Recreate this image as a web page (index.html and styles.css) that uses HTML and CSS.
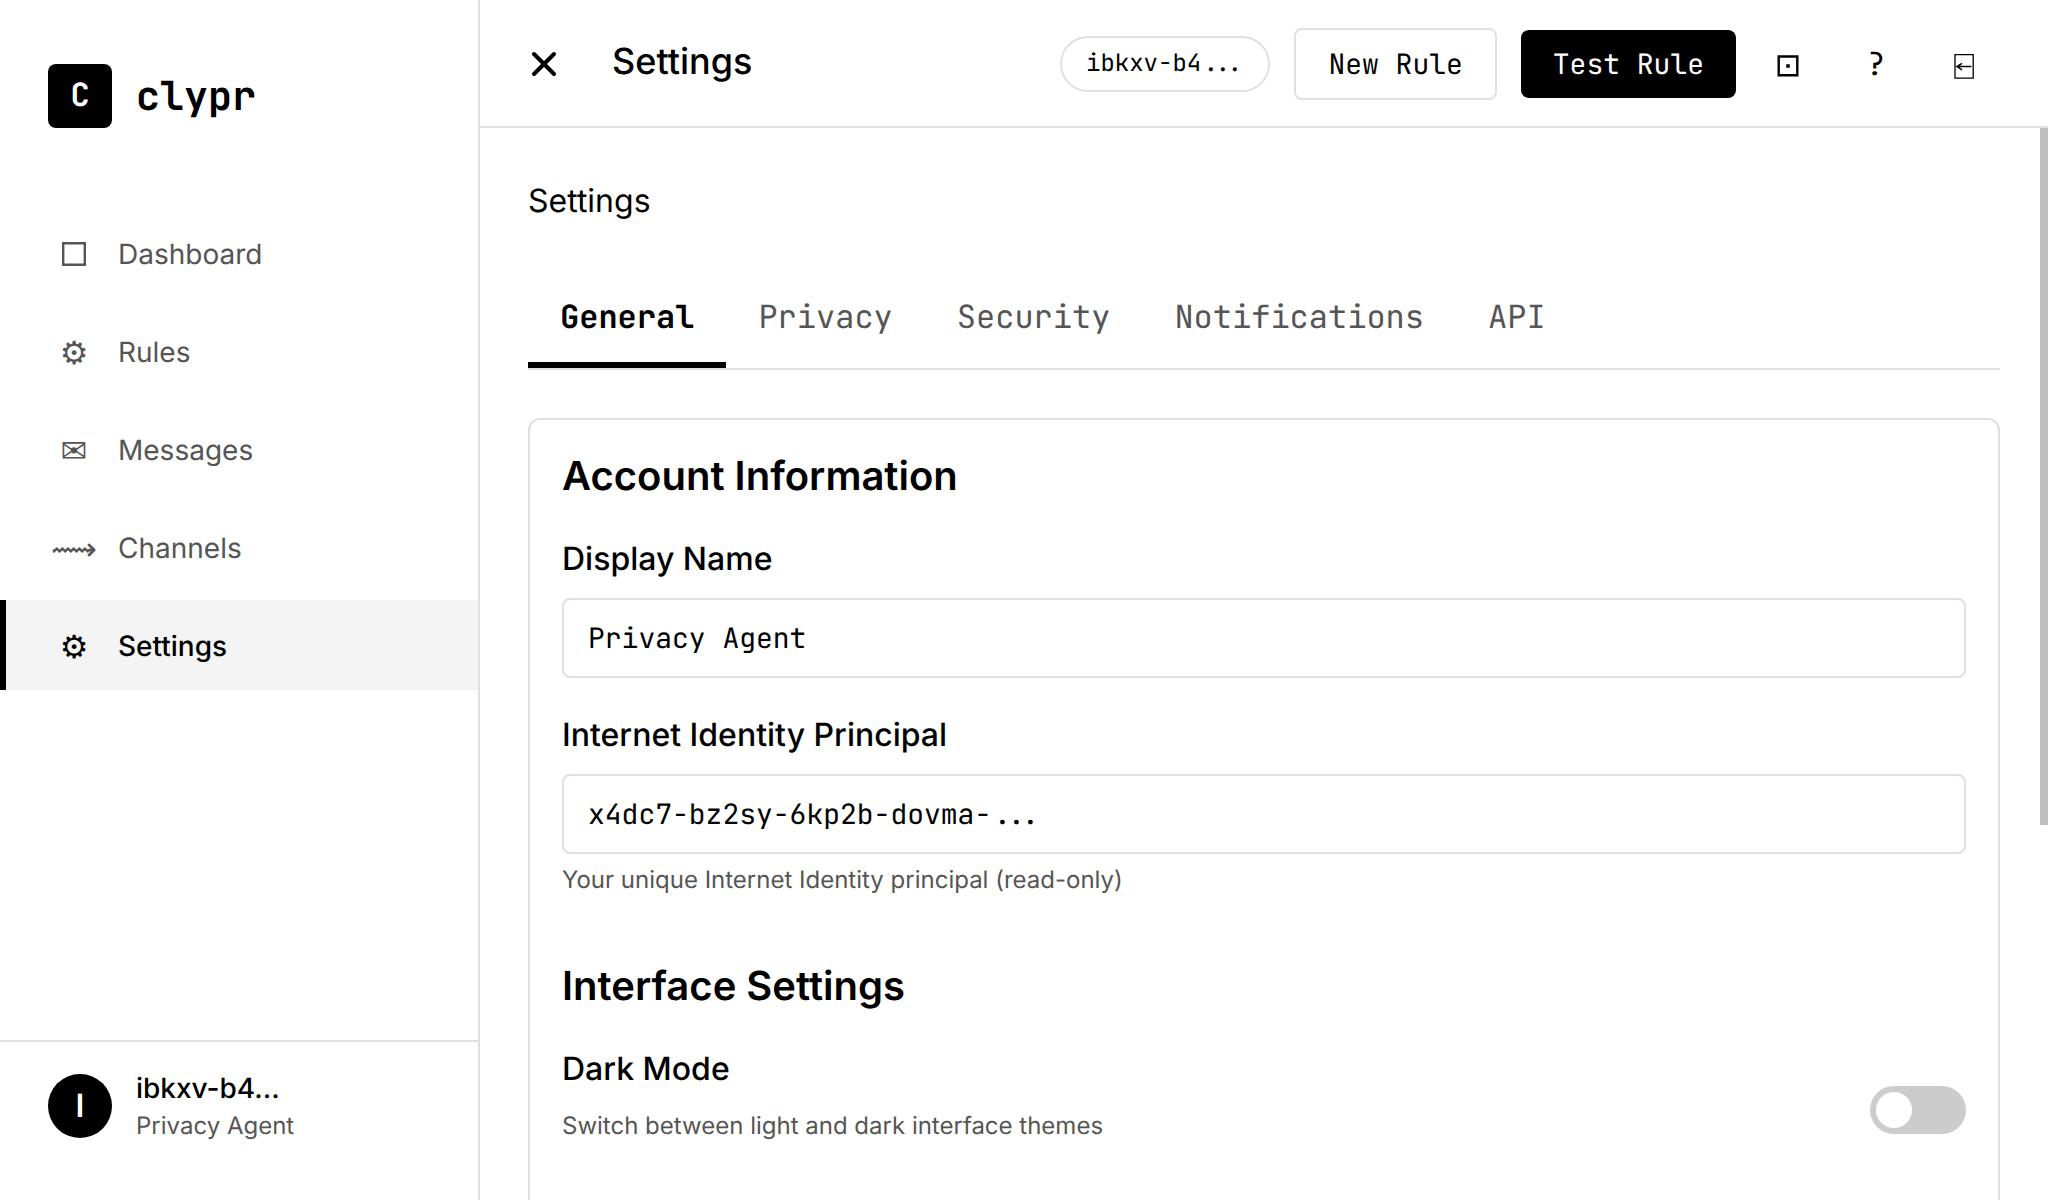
FILE: index.html
```html
<!DOCTYPE html>
<html lang="en">
<head>
<meta charset="utf-8">
<meta name="viewport" content="width=device-width, initial-scale=1">
<title>clypr - Settings</title>
<link rel="stylesheet" href="styles.css">
</head>
<body>
<div class="app">
  <aside class="sidebar">
    <div class="brand">
      <span class="brand-mark">C</span>
      <span class="brand-name">clypr</span>
    </div>
    <nav class="nav" aria-label="Main">
      <a class="nav-item" href="#dashboard"><span class="nav-icon" aria-hidden="true"><svg viewBox="0 0 24 26" width="24" height="26"><path d="M1.2 1.2h21.6v21.6H1.2z" fill="none" stroke="currentColor" stroke-width="2.4"/></svg></span>Dashboard</a>
      <a class="nav-item" href="#rules"><span class="nav-icon" aria-hidden="true">⚙</span>Rules</a>
      <a class="nav-item" href="#messages"><span class="nav-icon" aria-hidden="true">✉</span>Messages</a>
      <a class="nav-item" href="#channels"><span class="nav-icon" aria-hidden="true">⟿</span>Channels</a>
      <a class="nav-item active" href="#settings" aria-current="page"><span class="nav-icon" aria-hidden="true">⚙</span>Settings</a>
    </nav>
    <div class="user">
      <span class="avatar">I</span>
      <div class="user-info">
        <div class="user-name">ibkxv-b4...</div>
        <div class="user-role">Privacy Agent</div>
      </div>
    </div>
  </aside>

  <div class="main">
    <header class="header">
      <button class="icon-btn" type="button" aria-label="Close menu">
        <svg viewBox="0 0 32 32" width="32" height="32" aria-hidden="true"><path d="M6 6 26 26M26 6 6 26" fill="none" stroke="currentColor" stroke-width="4" stroke-linecap="round"/></svg>
      </button>
      <h1 class="title">Settings</h1>
      <div class="actions">
        <span class="pill">ibkxv-b4...</span>
        <button class="btn" type="button">New Rule</button>
        <button class="btn btn-primary" type="button">Test Rule</button>
        <div class="icon-group">
          <button class="icon-btn" type="button" aria-label="Notifications">
            <svg viewBox="0 0 32 32" width="32" height="32" aria-hidden="true"><path d="M6.7 8.5h18.6v18.8H6.7z" fill="none" stroke="currentColor" stroke-width="2.4"/><path d="M14.2 16.2h3.6v3.6h-3.6z" fill="currentColor"/></svg>
          </button>
          <button class="icon-btn help" type="button" aria-label="Help">?</button>
          <button class="icon-btn" type="button" aria-label="Log out">
            <svg viewBox="0 0 32 32" width="32" height="32" aria-hidden="true"><path d="M7 6.6h18.2v23.6H7z" fill="none" stroke="currentColor" stroke-width="1.3"/><path d="M23.4 18.6H9.2M14 15.4 9 18.6 14 21.8" fill="none" stroke="currentColor" stroke-width="1.5"/></svg>
          </button>
        </div>
      </div>
    </header>

    <div class="viewport">
      <main class="content">
        <h2 class="page-title">Settings</h2>
        <div class="tabs" role="tablist">
          <button class="tab active" type="button" role="tab" aria-selected="true">General</button>
          <button class="tab" type="button" role="tab">Privacy</button>
          <button class="tab" type="button" role="tab">Security</button>
          <button class="tab" type="button" role="tab">Notifications</button>
          <button class="tab" type="button" role="tab">API</button>
        </div>

        <section class="card">
          <h3 class="section-title">Account Information</h3>
          <div class="field">
            <label class="label" for="display-name">Display Name</label>
            <input class="input" id="display-name" type="text" value="Privacy Agent">
          </div>
          <div class="field">
            <label class="label" for="principal">Internet Identity Principal</label>
            <input class="input" id="principal" type="text" value="x4dc7-bz2sy-6kp2b-dovma-..." readonly>
            <p class="hint">Your unique Internet Identity principal (read-only)</p>
          </div>
          <h3 class="section-title second">Interface Settings</h3>
          <div class="toggle-row">
            <div class="toggle-text">
              <label class="label" for="dark-mode">Dark Mode</label>
              <p class="hint">Switch between light and dark interface themes</p>
            </div>
            <input class="switch" id="dark-mode" type="checkbox" role="switch">
          </div>
        </section>
      </main>
      <div class="scroll-thumb" aria-hidden="true"></div>
    </div>
  </div>
</div>
</body>
</html>
```
FILE: styles.css
```css
:root {
  --black: #000;
  --muted: #555;
  --line: #e0e0e0;
  --sans: Inter, "Liberation Sans", sans-serif;
  --mono: "JetBrains Mono", "DejaVu Sans Mono", monospace;
  --symbols: "DejaVu Sans", sans-serif;
}

* { box-sizing: border-box; margin: 0; padding: 0; }

body {
  font-family: var(--sans);
  font-size: 28px;
  line-height: 42px;
  color: var(--black);
  background: #fff;
  font-optical-sizing: none;
  text-rendering: geometricPrecision;
}

button, input { text-rendering: inherit; }
button { font: inherit; color: inherit; background: none; border: 0; cursor: pointer; }

.app { display: flex; height: 100vh; }

/* Sidebar */
.sidebar {
  flex: 0 0 480px;
  display: flex;
  flex-direction: column;
  border-right: 2px solid var(--line);
}

.brand { display: flex; align-items: center; gap: 24px; padding: 64px 48px 80px; }

.brand-mark {
  width: 64px;
  height: 64px;
  border-radius: 8px;
  background: var(--black);
  color: #fff;
  font: bold 32px/62px var(--mono);
  text-align: center;
}

.brand-name { font: bold 40px/60px var(--mono); }

.nav { flex: 1; display: flex; flex-direction: column; gap: 8px; }

.nav-item {
  display: flex;
  align-items: center;
  gap: 24px;
  padding: 25px 48px 23px;
  border-left: 6px solid transparent;
  color: var(--muted);
  text-decoration: none;
}

.nav-item.active {
  border-left-color: var(--black);
  background: #f4f4f4;
  color: var(--black);
  font-weight: 500;
}

.nav-icon {
  display: flex;
  align-items: center;
  justify-content: center;
  width: 40px;
  height: 42px;
  padding-top: 2px;
  font: 400 32px/42px var(--symbols);
}

.user {
  display: flex;
  align-items: center;
  gap: 24px;
  padding: 26px 48px 56px;
  border-top: 2px solid var(--line);
}

.avatar {
  width: 64px;
  height: 64px;
  border-radius: 50%;
  background: var(--black);
  color: #fff;
  font-size: 32px;
  font-weight: 600;
  line-height: 64px;
  text-align: center;
}

.user-name { font-weight: 500; line-height: 40px; }
.user-role { font-size: 24px; line-height: 36px; color: var(--muted); }

/* Header */
.main { flex: 1; min-width: 0; display: flex; flex-direction: column; }

.header {
  display: flex;
  align-items: center;
  height: 128px;
  padding: 2px 56px 0 36px;
  border-bottom: 2px solid var(--line);
}

.title { padding: 0 0 6px 40px; font-size: 36px; font-weight: 500; line-height: 54px; }

.actions { display: flex; align-items: center; gap: 24px; margin-left: auto; }

.pill {
  padding: 8px 24px;
  border: 2px solid var(--line);
  border-radius: 28px;
  font: 24px/36px var(--mono);
}

.btn {
  padding: 17px 32px 15px;
  border: 2px solid var(--line);
  border-radius: 8px;
  font: 28px/36px var(--mono);
}

.btn-primary { border: 0; background: var(--black); color: #fff; }

.icon-group { display: flex; gap: 32px; }

.icon-btn {
  display: flex;
  align-items: center;
  justify-content: center;
  width: 56px;
  height: 56px;
}

.icon-btn.help { font: 32px/48px var(--mono); }

/* Content */
.viewport { position: relative; flex: 1; min-height: 0; }

.content {
  display: flex;
  flex-direction: column;
  height: 100%;
  padding: 48px 48px 0;
  overflow-y: auto;
  scrollbar-width: none;
}

.scroll-thumb {
  position: absolute;
  top: 0;
  right: 0;
  width: 8px;
  height: 65%;
  background: #bfbfbf;
}

.page-title { font-size: 32px; font-weight: 400; line-height: 50px; }

.tabs { display: flex; margin: 38px 0 48px; border-bottom: 2px solid var(--line); }

.tab {
  padding: 32px 32px 24px;
  border-bottom: 6px solid transparent;
  color: var(--muted);
  font: 32px/42px var(--mono);
}

.tab.active { border-bottom-color: var(--black); color: var(--black); font-weight: bold; }

.card {
  flex: 1 0 100%;
  padding: 32px;
  border: 2px solid var(--line);
  border-radius: 12px;
}

.section-title { margin-bottom: 34px; font-size: 40px; font-weight: 600; line-height: 48px; }
.section-title.second { margin-top: 64px; }

.field + .field { margin-top: 32px; }

.label { display: block; font-size: 32px; font-weight: 500; line-height: 50px; }

.input {
  display: block;
  width: 100%;
  height: 80px;
  margin-top: 14px;
  padding: 20px 24px;
  border: 2px solid var(--line);
  border-radius: 8px;
  background: #fff;
  color: var(--black);
  font: 28px/36px var(--mono);
}

.hint { margin-top: 8px; font-size: 24px; line-height: 36px; color: var(--muted); }

.toggle-row { display: flex; align-items: center; justify-content: space-between; }

.toggle-text { padding-bottom: 32px; }
.toggle-text .hint { margin-top: 14px; }

.switch {
  appearance: none;
  display: flex;
  width: 96px;
  height: 48px;
  padding: 6px;
  border-radius: 24px;
  background: #ccc;
  cursor: pointer;
}

.switch::before {
  content: "";
  width: 36px;
  height: 36px;
  border-radius: 50%;
  background: #fff;
}

.switch:checked { justify-content: flex-end; background: var(--black); }
```
